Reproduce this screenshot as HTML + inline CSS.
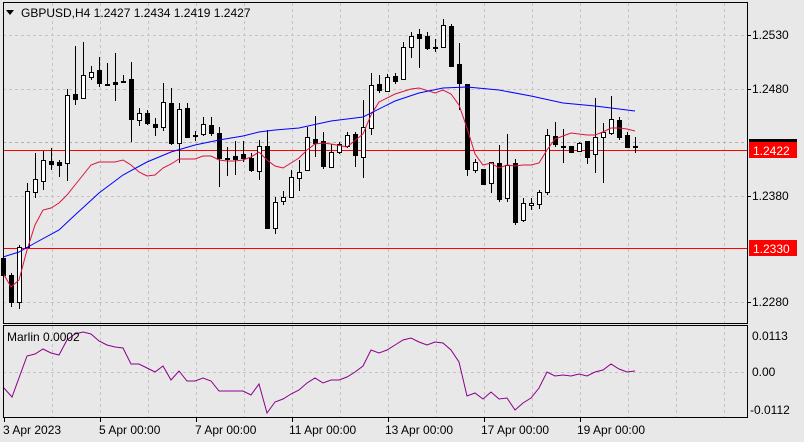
<!DOCTYPE html>
<html><head><meta charset="utf-8"><style>
html,body{margin:0;padding:0;background:#e8e8e8;}
svg{display:block;font-family:"Liberation Sans",sans-serif;}
</style></head><body>
<svg id="s" width="804" height="442" xmlns="http://www.w3.org/2000/svg">
<rect width="804" height="442" fill="#e8e8e8"/>
<g id="grid" stroke="#c4c4c4" stroke-dasharray="3,3" stroke-width="1"></g>
<line x1="3" y1="150.5" x2="747" y2="150.5" stroke="#ff0000" stroke-width="1"/>
<line x1="3" y1="248.5" x2="747" y2="248.5" stroke="#ff0000" stroke-width="1"/>
<line x1="3" y1="142.5" x2="747" y2="142.5" stroke="#b0b0b0" stroke-dasharray="3,3"/>
<g id="c"></g>
<polyline id="red" fill="none" stroke="#dc143c" stroke-width="1"/>
<polyline id="blue" fill="none" stroke="#0000ff" stroke-width="1"/>
<polyline id="ind" fill="none" stroke="#8b008b" stroke-width="1"/>
<rect x="3.5" y="2.5" width="744" height="321" fill="none" stroke="#000"/>
<rect x="3.5" y="325.5" width="744" height="92" fill="none" stroke="#000"/>
<g font-size="12" fill="#000">
<path d="M6 10 L14 10 L10 15 Z" fill="#000"/>
<text x="21" y="17">GBPUSD,H4  1.2427 1.2434 1.2419 1.2427</text>
<text x="7" y="341">Marlin 0.0002</text>
<text x="752" y="39">1.2530</text>
<text x="752" y="93">1.2480</text>
<text x="752" y="200">1.2380</text>
<text x="752" y="306">1.2280</text>
<rect x="749" y="139" width="48" height="9" fill="#000"/>
<rect x="749" y="142" width="48" height="16" fill="#ff0000"/>
<text x="753" y="155" fill="#fff">1.2422</text>
<rect x="749" y="240" width="48" height="16" fill="#ff0000"/>
<text x="753" y="253" fill="#fff">1.2330</text>
<text x="752" y="340">0.0113</text>
<text x="752" y="376">0.00</text>
<text x="750" y="414">-0.0112</text>
<text x="3" y="434">3 Apr 2023</text>
<text x="99" y="434">5 Apr 00:00</text>
<text x="195" y="434">7 Apr 00:00</text>
<text x="289" y="434">11 Apr 00:00</text>
<text x="385" y="434">13 Apr 00:00</text>
<text x="481" y="434">17 Apr 00:00</text>
<text x="577" y="434">19 Apr 00:00</text>
</g>
<g id="ticks" stroke="#000"></g>
</svg>
<script>
var ns="http://www.w3.org/2000/svg";
function el(p,t,a){var e=document.createElementNS(ns,t);for(var k in a)e.setAttribute(k,a[k]);p.appendChild(e);return e;}
var g=document.getElementById('grid'),tk=document.getElementById('ticks');
for(var x=52;x<747;x+=48){el(g,'line',{x1:x+.5,y1:3,x2:x+.5,y2:323});el(g,'line',{x1:x+.5,y1:326,x2:x+.5,y2:417});}
[35,89,196,302].forEach(function(y){el(g,'line',{x1:3,y1:y+.5,x2:747,y2:y+.5});el(tk,'line',{x1:747,y1:y+.5,x2:751,y2:y+.5});});
el(g,'line',{x1:3,y1:372.5,x2:747,y2:372.5});
[4,100,196,292,388,484,580].forEach(function(x){el(tk,'line',{x1:x+.5,y1:418,x2:x+.5,y2:422});});
var C=[[3,258,275,248,300,0],[11,275,302,273,307,0],[19,247,302,245,309,1],[27,191,247,183,248,1],[35,179,192,153,198,1],[43,160,181,151,190,1],[51,161,164,148,170,0],[59,162,165,160,177,0],[67,95,163,89,181,1],[75,94,99,46,105,0],[83,75,98,42,98,1],[91,72,77,66,80,1],[99,70,83,57,87,0],[107,84,85,63,85,0],[115,82,84,53,101,0],[123,81,82,75,82,0],[131,79,119,62,142,0],[139,113,120,108,126,1],[147,113,123,110,125,0],[155,124,127,118,136,0],[163,102,127,83,131,1],[171,103,143,88,145,0],[179,109,143,103,163,1],[187,108,137,103,138,0],[195,135,136,131,141,0],[203,124,134,117,136,1],[211,125,133,117,136,0],[219,133,158,127,187,0],[227,158,159,147,176,0],[235,156,159,141,175,0],[243,154,158,141,162,0],[251,158,170,153,172,0],[259,146,171,140,180,1],[267,146,228,130,229,0],[275,202,228,197,234,1],[283,197,201,191,205,1],[291,177,197,170,198,1],[299,172,178,160,191,1],[307,137,170,127,171,1],[315,139,143,116,157,0],[323,141,166,132,169,0],[331,152,167,144,168,1],[339,144,152,142,154,1],[347,135,146,132,148,1],[355,134,155,132,167,0],[363,127,157,100,178,1],[371,85,128,73,135,1],[379,84,90,75,93,0],[387,77,91,74,92,1],[395,76,81,73,84,0],[403,47,79,42,80,1],[411,36,47,32,58,1],[419,34,38,29,68,0],[427,36,48,32,50,0],[435,47,48,39,52,0],[443,25,47,19,48,1],[451,26,66,24,67,0],[459,64,83,43,110,0],[467,84,169,84,176,0],[475,162,170,159,173,1],[483,169,184,169,185,0],[491,162,183,162,193,1],[499,163,199,145,202,0],[507,165,198,134,202,1],[515,163,222,159,225,0],[523,203,220,198,222,1],[531,203,205,198,210,1],[539,192,204,190,209,1],[547,135,192,129,195,1],[555,136,144,122,147,0],[563,146,147,129,163,0],[571,146,152,146,153,0],[579,143,151,142,152,1],[587,141,157,141,164,0],[595,137,154,98,173,1],[603,132,137,123,183,1],[611,119,133,96,135,1],[619,120,137,117,140,0],[627,135,147,132,148,0],[635,146,147,137,153,0]];
var cg=document.getElementById('c');
C.forEach(function(c){var x=c[0];el(cg,'line',{x1:x+.5,y1:c[3],x2:x+.5,y2:c[4],stroke:'#000'});
var h=Math.max(c[2]-c[1],1);
if(c[5])el(cg,'rect',{x:x-2+.5,y:c[1]+.5,width:4,height:h,fill:'#fff',stroke:'#000'});
else el(cg,'rect',{x:x-2,y:c[1],width:5,height:h+1,fill:'#000'});});
document.getElementById('red').setAttribute('points',"3,273 11,287 19,280 27,250 35,225 43,210 51,208 59,203 67,195 75,185 83,175 91,165 99,162 107,162 115,162 123,160 131,165 139,172 147,176 155,175 163,168 171,164 179,159 187,159 195,159 203,156 211,156 219,160 227,161 235,161 243,160 251,157 259,152 267,160 275,166 283,168 291,163 299,158 307,150 315,144 323,143 331,144 347,147 363,134 371,115 379,102 395,94 411,89 419,88 435,93 443,90 451,94 459,105 467,128 475,154 483,165 491,163 499,168 507,165 515,166 523,165 531,165 539,163 547,150 555,139 563,136 571,133 579,134 587,135 595,135 603,132 611,128 619,128 627,129 635,131");
document.getElementById('blue').setAttribute('points',"3,257 19,252 35,243 59,230 75,215 99,193 123,175 147,162 171,152 195,145 219,140 243,136 259,132 275,130 299,128 331,121 363,117 395,101 419,93 443,88 467,87 499,90 531,96 563,103 595,106 611,108 635,111");
document.getElementById('ind').setAttribute('points',"3,387 12,397 27,356 35,354 43,349 51,353 59,355 67,340 75,334 83,332 91,334 99,341 107,345 115,347 123,348 131,364 139,364 147,368 155,372 163,366 171,380 179,371 187,381 195,381 203,378 211,381 219,391 227,391 235,391 243,391 251,395 259,384 267,413 275,402 283,399 291,394 299,390 307,383 315,378 323,383 331,380 339,380 347,377 355,372 363,366 371,350 379,353 387,350 395,345 403,340 411,338 419,342 427,345 435,342 443,343 451,350 459,362 467,396 475,393 483,399 491,392 499,399 507,398 515,410 523,403 531,398 539,388 547,372 555,376 563,375 571,376 579,374 587,376 595,372 603,370 611,364 619,369 627,372 635,371");
</script>
</body></html>
